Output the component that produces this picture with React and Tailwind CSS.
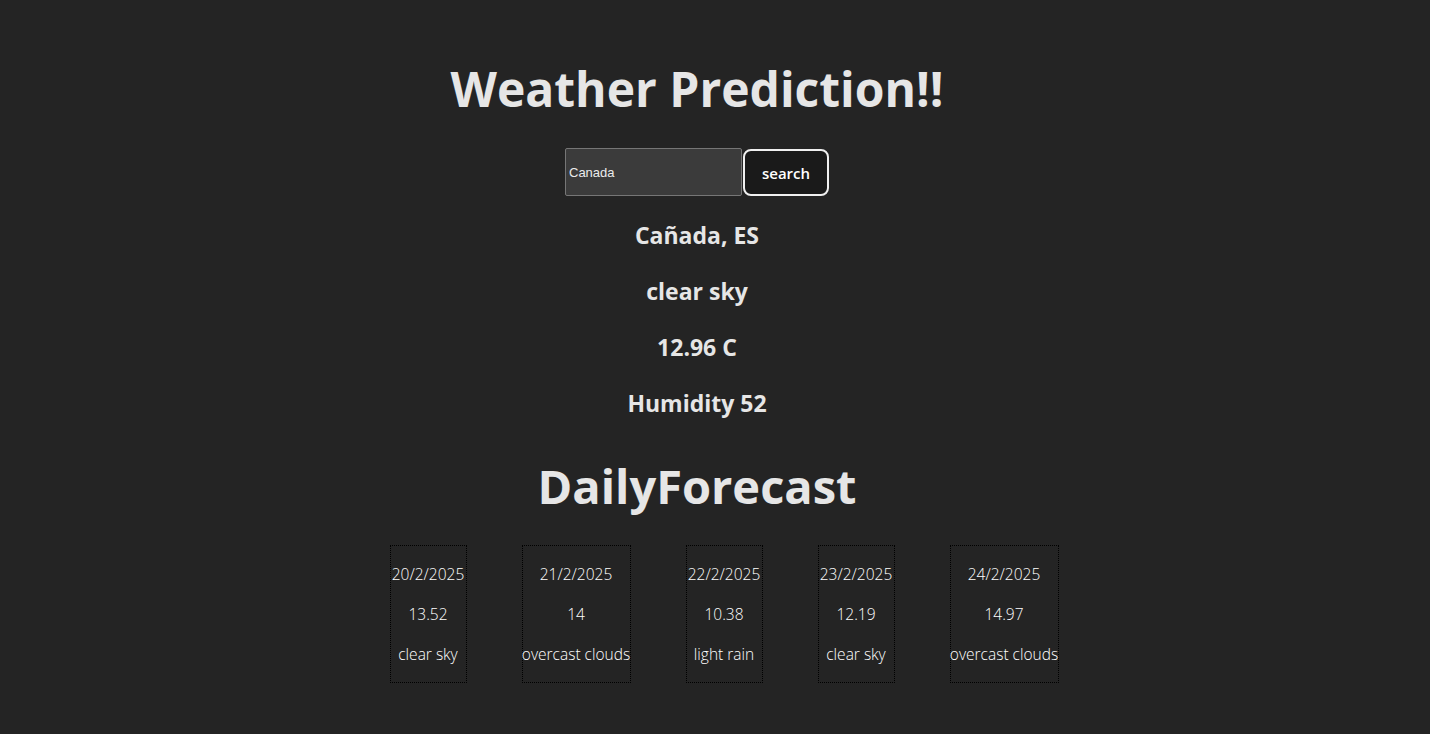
import React from "react";

const days = [
  { date: "20/2/2025", temp: "13.52", desc: "clear sky", w: "w-[77px]" },
  { date: "21/2/2025", temp: "14", desc: "overcast clouds", w: "w-[109px]" },
  { date: "22/2/2025", temp: "10.38", desc: "light rain", w: "w-[77px]" },
  { date: "23/2/2025", temp: "12.19", desc: "clear sky", w: "w-[77px]" },
  { date: "24/2/2025", temp: "14.97", desc: "overcast clouds", w: "w-[109px]" },
];

export default function App() {
  return (
    <div className="min-h-screen w-full bg-[#242424] text-[rgba(255,255,255,0.87)] font-['Open_Sans',sans-serif] flex flex-col items-center pr-[36px]">
      <h1 className="mt-[61px] text-[48px] leading-[56px] font-bold text-[#e6e6e6] whitespace-nowrap">
        Weather Prediction!!
      </h1>
      <div className="mt-[31px] flex items-center h-[48px]">
        <input
          type="text"
          defaultValue="Canada"
          className="w-[177px] h-[48px] bg-[#3b3b3b] border border-[#767676] rounded-[2px] px-[3px] text-[13px] text-[#ececec] font-['Liberation_Sans',sans-serif] outline-none"
        />
        <button className="ml-[1px] w-[86px] h-[47px] pt-[2px] bg-[#1a1a1a] border-2 border-[#f0f0f0] rounded-[8px] text-[15px] font-semibold text-white">
          search
        </button>
      </div>
      <div className="mt-[21px] flex flex-col items-center gap-[20px] text-[23px] font-bold text-[#e6e6e6]">
        <h2 className="leading-[36px]">Cañada, ES</h2>
        <h2 className="leading-[36px]">clear sky</h2>
        <h2 className="leading-[36px]">12.96 C</h2>
        <h2 className="leading-[36px]">Humidity 52</h2>
      </div>
      <h1 className="mt-[37px] text-[47px] leading-[56px] font-bold text-[#e6e6e6]">
        DailyForecast
      </h1>
      <div className="mt-[31px] ml-[54px] flex gap-[55px]">
        {days.map((d) => (
          <div
            key={d.date}
            className={`${d.w} border border-dotted border-black flex flex-col items-center text-[15.5px] font-light text-white whitespace-nowrap`}
          >
            <p className="mt-[16px] leading-[24px]">{d.date}</p>
            <p className="mt-[16px] leading-[24px]">{d.temp}</p>
            <p className="mt-[16px] mb-[16px] leading-[24px]">{d.desc}</p>
          </div>
        ))}
      </div>
    </div>
  );
}
